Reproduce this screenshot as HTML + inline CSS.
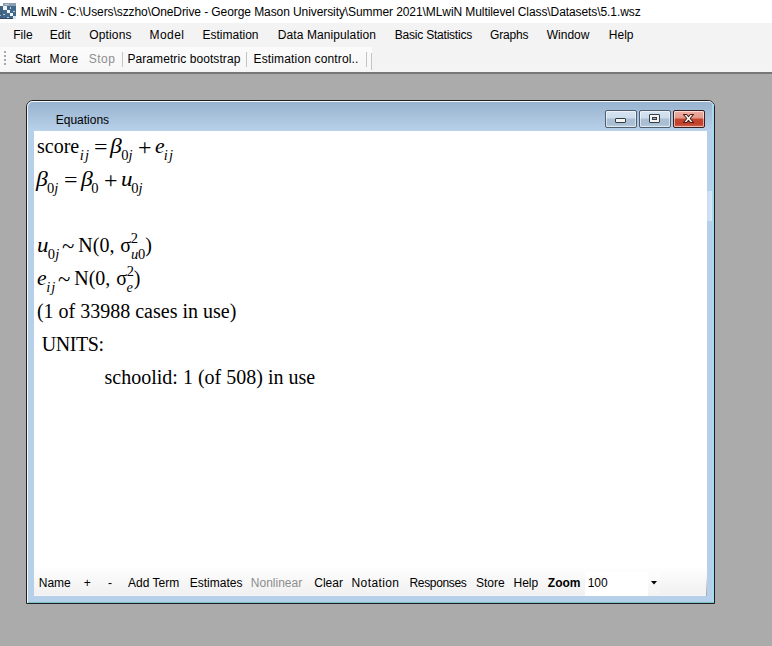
<!DOCTYPE html>
<html><head><meta charset="utf-8">
<style>
*{margin:0;padding:0;box-sizing:border-box}
html,body{width:772px;height:646px;overflow:hidden;background:#ababab;font-family:"Liberation Sans",sans-serif;color:#000}
.t{position:absolute;white-space:pre;line-height:1}
.b{position:absolute}
.sr{font-family:"Liberation Serif",serif}
</style></head><body>

<div class="b" style="left:0;top:0;width:772px;height:23px;background:#fff"></div>
<svg class="b" style="left:0;top:3px" width="17" height="16" viewBox="0 0 17 16">
<rect x="3" y="0" width="13" height="3" fill="#8c9fb1"/>
<rect x="5" y="1" width="4" height="1" fill="#b8c6d2"/>
<rect x="0" y="3" width="16" height="13" fill="#42698a"/>
<rect x="0" y="3" width="3" height="13" fill="#3d6282"/>
<rect x="3" y="3" width="4" height="4" fill="#f2f6f9"/>
<rect x="7" y="7" width="3" height="3" fill="#f2f6f9"/>
<rect x="10" y="10" width="3" height="3" fill="#f2f6f9"/>
<rect x="13" y="13" width="3" height="3" fill="#dfe7ee"/>
<rect x="10" y="4" width="1" height="2" fill="#b9d3e6"/>
<rect x="13" y="8" width="2" height="1" fill="#b9d3e6"/>
<rect x="3" y="11" width="2" height="1" fill="#b9d3e6"/>
<rect x="7" y="14" width="2" height="1" fill="#b9d3e6"/>
<rect x="0" y="12" width="1" height="1" fill="#9fb8cc"/>
<rect x="0" y="15" width="13" height="1" fill="#2d4a62"/>
</svg>
<span class="t" style="left:20.82px;top:5.84px;font-size:12px;letter-spacing:-0.083px;">MLwiN - C:\Users\szzho\OneDrive - George Mason University\Summer 2021\MLwiN Multilevel Class\Datasets\5.1.wsz</span>
<div class="b" style="left:0;top:23px;width:772px;height:23px;background:#f3f3f3"></div>
<span class="t" style="left:13.22px;top:28.84px;font-size:12px;">File</span>
<span class="t" style="left:49.82px;top:28.84px;font-size:12px;">Edit</span>
<span class="t" style="left:89.23px;top:28.84px;font-size:12px;letter-spacing:0.15px;">Options</span>
<span class="t" style="left:149.52px;top:28.84px;font-size:12px;letter-spacing:0.45px;">Model</span>
<span class="t" style="left:202.52px;top:28.84px;font-size:12px;">Estimation</span>
<span class="t" style="left:277.72px;top:28.84px;font-size:12px;letter-spacing:0.1px;">Data Manipulation</span>
<span class="t" style="left:394.82px;top:28.84px;font-size:12px;letter-spacing:-0.22px;">Basic Statistics</span>
<span class="t" style="left:490.10px;top:28.84px;font-size:12px;letter-spacing:-0.2px;">Graphs</span>
<span class="t" style="left:546.75px;top:28.84px;font-size:12px;">Window</span>
<span class="t" style="left:608.82px;top:28.84px;font-size:12px;">Help</span>
<div class="b" style="left:0;top:46px;width:772px;height:26px;background:#f3f3f3"></div>
<div class="b" style="left:0;top:47px;width:372px;height:24px;background:linear-gradient(#fbfbfb,#f7f7f7)"></div>
<div class="b" style="left:4px;top:51px;width:2px;height:2px;background:#a8a8a8"></div>
<div class="b" style="left:4px;top:55px;width:2px;height:2px;background:#a8a8a8"></div>
<div class="b" style="left:4px;top:59px;width:2px;height:2px;background:#a8a8a8"></div>
<div class="b" style="left:4px;top:63px;width:2px;height:2px;background:#a8a8a8"></div>
<div class="b" style="left:0;top:71px;width:772px;height:1px;background:#f4f4f4"></div>
<div class="b" style="left:0;top:72px;width:772px;height:2px;background:#777"></div>
<span class="t" style="left:14.96px;top:52.84px;font-size:12px;">Start</span>
<span class="t" style="left:49.52px;top:52.84px;font-size:12px;letter-spacing:0.45px;">More</span>
<span class="t" style="left:88.76px;top:52.84px;font-size:12px;color:#8d8d8d;letter-spacing:0.5px;">Stop</span>
<span class="t" style="left:127.42px;top:52.84px;font-size:12px;letter-spacing:0.08px;">Parametric bootstrap</span>
<span class="t" style="left:253.52px;top:52.84px;font-size:12px;letter-spacing:0.15px;">Estimation control..</span>
<div class="b" style="left:122px;top:52px;width:1px;height:15px;background:#c4c4c4"></div>
<div class="b" style="left:246px;top:52px;width:1px;height:15px;background:#c4c4c4"></div>
<div class="b" style="left:366px;top:52px;width:1px;height:15px;background:#c4c4c4"></div>
<div class="b" style="left:371px;top:53px;width:1px;height:17px;background:#c4c4c4"></div>
<div class="b" style="left:26px;top:100px;width:689px;height:504px;border:1px solid #1f1f1f;border-radius:7px 7px 0 0;background:#b9d1ea"></div>
<div class="b" style="left:27px;top:101px;width:687px;height:502px;border:1px solid rgba(255,255,255,.85);border-right:0;border-bottom:0;border-radius:6px 6px 0 0;background:linear-gradient(#97b3cf,#b9d1ea 29px,#b9d1ea)"></div>
<div class="b" style="left:28px;top:131px;width:685px;height:471px;background:#b7d0ea"></div>
<div class="b" style="left:712px;top:104px;width:2px;height:498px;background:linear-gradient(90deg,#b4d6ee,#98dcf4)"></div>
<div class="b" style="left:28px;top:602px;width:686px;height:1px;background:#7cc2cc"></div>
<div class="b" style="left:34px;top:131px;width:673px;height:465px;background:#fff"></div>
<span class="t" style="left:55.72px;top:113.84px;font-size:12px;">Equations</span>
<div class="b" style="left:605px;top:110px;width:32px;height:18px;border:1px solid #4f5f70;border-radius:2px;background:linear-gradient(#d6e3f0 0,#cddcec 7px,#aabfd4 8px,#a9bed3 13px,#c4d6e8 17px);box-shadow:inset 0 0 0 1px rgba(255,255,255,.55)"></div>
<div class="b" style="left:639px;top:110px;width:32px;height:18px;border:1px solid #4f5f70;border-radius:2px;background:linear-gradient(#d6e3f0 0,#cddcec 7px,#aabfd4 8px,#a9bed3 13px,#c4d6e8 17px);box-shadow:inset 0 0 0 1px rgba(255,255,255,.55)"></div>
<div class="b" style="left:673px;top:110px;width:32px;height:18px;border:1px solid #3b1e1e;border-radius:2px;background:linear-gradient(#eeb0a4 0,#e39a8a 7px,#c6452e 8px,#c2402a 13px,#d87a66 17px);box-shadow:inset 0 0 0 1px rgba(255,255,255,.55)"></div>
<div class="b" style="left:615px;top:118px;width:11px;height:5px;border:1px solid #333d48;border-radius:1px;background:#f4f4f0"></div>
<div class="b" style="left:649px;top:114px;width:11px;height:9px;border:1px solid #333d48;border-radius:1px;background:#f4f4f0"></div>
<div class="b" style="left:652px;top:117px;width:5px;height:3px;border:1px solid #333d48;background:#9aaab8"></div>
<svg class="b" style="left:682px;top:113px" width="13" height="11" viewBox="0 0 13 11">
<path d="M1.5 1.5 H4.6 L6.5 3.6 L8.4 1.5 H11.5 L8.2 5.5 L11.5 9.5 H8.4 L6.5 7.4 L4.6 9.5 H1.5 L4.8 5.5 Z" fill="#fff" stroke="#4a2018" stroke-width="1.1" stroke-linejoin="round"/>
</svg>
<span class="t sr" style="left:36.98px;top:136.25px;font-size:20px;">score</span>
<span class="t sr" style="left:79.79px;top:147.86px;font-size:14.5px;font-style:italic;letter-spacing:1.2px;">ij</span>
<span class="t sr" style="left:93.70px;top:136.95px;font-size:20px;transform:scaleX(1.2);transform-origin:0 0;">=</span>
<span class="t sr" style="left:109.92px;top:136.25px;font-size:20px;font-style:italic;transform:scaleX(1.18);transform-origin:0 0;">β</span>
<span class="t sr" style="left:121.25px;top:147.86px;font-size:14.5px;">0</span>
<span class="t sr" style="left:128.55px;top:147.86px;font-size:14.5px;font-style:italic;">j</span>
<span class="t sr" style="left:137.60px;top:137.55px;font-size:20px;transform:scale(1.2,1.15);transform-origin:0 16.75px;">+</span>
<span class="t sr" style="left:154.78px;top:136.25px;font-size:20px;font-style:italic;transform:scaleX(1.08);transform-origin:0 0;">e</span>
<span class="t sr" style="left:163.69px;top:147.86px;font-size:14.5px;font-style:italic;letter-spacing:1.2px;">ij</span>
<span class="t sr" style="left:36.12px;top:169.25px;font-size:20px;font-style:italic;transform:scaleX(1.18);transform-origin:0 0;">β</span>
<span class="t sr" style="left:46.95px;top:180.86px;font-size:14.5px;">0</span>
<span class="t sr" style="left:54.25px;top:180.86px;font-size:14.5px;font-style:italic;">j</span>
<span class="t sr" style="left:63.80px;top:169.95px;font-size:20px;transform:scaleX(1.2);transform-origin:0 0;">=</span>
<span class="t sr" style="left:80.52px;top:169.25px;font-size:20px;font-style:italic;transform:scaleX(1.18);transform-origin:0 0;">β</span>
<span class="t sr" style="left:91.35px;top:180.86px;font-size:14.5px;">0</span>
<span class="t sr" style="left:103.60px;top:170.55px;font-size:20px;transform:scale(1.2,1.15);transform-origin:0 16.75px;">+</span>
<span class="t sr" style="left:120.90px;top:169.25px;font-size:20px;font-style:italic;transform:scaleX(1.15);transform-origin:0 0;">u</span>
<span class="t sr" style="left:131.15px;top:180.86px;font-size:14.5px;">0</span>
<span class="t sr" style="left:138.45px;top:180.86px;font-size:14.5px;font-style:italic;">j</span>
<span class="t sr" style="left:37.10px;top:235.25px;font-size:20px;font-style:italic;transform:scaleX(1.15);transform-origin:0 0;">u</span>
<span class="t sr" style="left:47.85px;top:246.86px;font-size:14.5px;">0</span>
<span class="t sr" style="left:55.15px;top:246.86px;font-size:14.5px;font-style:italic;">j</span>
<span class="t sr" style="left:62.44px;top:236.25px;font-size:20px;transform:scaleX(1.14);transform-origin:0 0;">~</span>
<span class="t sr" style="left:78.32px;top:235.25px;font-size:20px;">N(0,</span>
<span class="t sr" style="left:120.24px;top:235.25px;font-size:20px;">σ</span>
<span class="t sr" style="left:130.66px;top:231.16px;font-size:14.5px;">2</span>
<span class="t sr" style="left:130.88px;top:246.86px;font-size:14.5px;font-style:italic;">u</span>
<span class="t sr" style="left:138.05px;top:246.86px;font-size:14.5px;">0</span>
<span class="t sr" style="left:145.16px;top:235.25px;font-size:20px;">)</span>
<span class="t sr" style="left:37.48px;top:268.25px;font-size:20px;font-style:italic;transform:scaleX(1.08);transform-origin:0 0;">e</span>
<span class="t sr" style="left:46.19px;top:279.86px;font-size:14.5px;font-style:italic;letter-spacing:1.0px;">ij</span>
<span class="t sr" style="left:58.34px;top:269.25px;font-size:20px;transform:scaleX(1.14);transform-origin:0 0;">~</span>
<span class="t sr" style="left:74.22px;top:268.25px;font-size:20px;">N(0,</span>
<span class="t sr" style="left:116.24px;top:268.25px;font-size:20px;">σ</span>
<span class="t sr" style="left:126.76px;top:264.16px;font-size:14.5px;">2</span>
<span class="t sr" style="left:126.55px;top:279.86px;font-size:14.5px;font-style:italic;">e</span>
<span class="t sr" style="left:133.76px;top:268.25px;font-size:20px;">)</span>
<span class="t sr" style="left:36.92px;top:301.25px;font-size:20px;">(1 of 33988 cases in use)</span>
<span class="t sr" style="left:41.68px;top:334.25px;font-size:20px;letter-spacing:-0.4px;">UNITS:</span>
<span class="t sr" style="left:104.58px;top:367.25px;font-size:20px;">schoolid: 1 (of 508) in use</span>
<div class="b" style="left:34px;top:566px;width:673px;height:29px;background:linear-gradient(#ffffff,#f0f0f0)"></div>
<div class="b" style="left:34px;top:595px;width:673px;height:1px;background:#f7f7fb"></div>
<span class="t" style="left:38.72px;top:576.84px;font-size:12px;">Name</span>
<span class="t" style="left:83.81px;top:576.84px;font-size:12px;">+</span>
<span class="t" style="left:108.07px;top:576.84px;font-size:12px;">-</span>
<span class="t" style="left:128.08px;top:576.84px;font-size:12px;">Add Term</span>
<span class="t" style="left:189.72px;top:576.84px;font-size:12px;">Estimates</span>
<span class="t" style="left:250.82px;top:576.84px;font-size:12px;color:#8d8d8d;">Nonlinear</span>
<span class="t" style="left:314.29px;top:576.84px;font-size:12px;">Clear</span>
<span class="t" style="left:351.52px;top:576.84px;font-size:12px;letter-spacing:0.4px;">Notation</span>
<span class="t" style="left:409.52px;top:576.84px;font-size:12px;letter-spacing:-0.35px;">Responses</span>
<span class="t" style="left:475.96px;top:576.84px;font-size:12px;">Store</span>
<span class="t" style="left:513.52px;top:576.84px;font-size:12px;">Help</span>
<span class="t" style="left:547.84px;top:576.84px;font-size:12px;font-weight:bold;">Zoom</span>
<div class="b" style="left:585px;top:572px;width:75px;height:24px;background:#fff"></div>
<div class="b" style="left:648px;top:572px;width:12px;height:24px;background:linear-gradient(#fdfdfd,#f3f3f3)"></div>
<span class="t" style="left:587.69px;top:576.84px;font-size:12px;">100</span>
<svg class="b" style="left:651px;top:581px" width="6" height="4" viewBox="0 0 6 4"><path d="M0 0H6L3 3.5Z" fill="#000"/></svg>
<div class="b" style="left:706px;top:576px;width:1px;height:20px;background:linear-gradient(rgba(160,160,160,0),#a0a0a0)"></div>
<div class="b" style="left:707px;top:191px;width:5px;height:30px;background:linear-gradient(90deg,#c9dbee,#d6e8f4)"></div>
</body></html>
